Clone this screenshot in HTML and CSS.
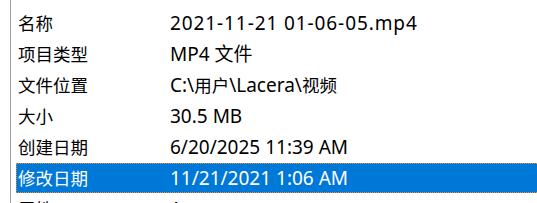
FILE: index.html
```html
<!DOCTYPE html>
<html lang="zh-CN">
  <head>
    <meta charset="utf-8">
    <title>属性</title>
    <link rel="stylesheet" href="styles.css">
  </head>
  <body>
    <div class="pane">
      <ul class="props">
        <li class="row partial"><span class="key"><span class="link">文件</span></span><span class="val"></span></li>
        <li class="row"><span class="key">名称</span><span class="val filename">2021-11-21 01-06-05.mp4</span></li>
        <li class="row"><span class="key">项目类型</span><span class="val">MP4 文件</span></li>
        <li class="row"><span class="key">文件位置</span><span class="val">C:\<span class="cjk">用户</span>\Lacera\<span class="cjk">视频</span></span></li>
        <li class="row"><span class="key">大小</span><span class="val">30.5 MB</span></li>
        <li class="row"><span class="key">创建日期</span><span class="val">6/20/2025 11:39 AM</span></li>
        <li class="row selected"><span class="key">修改日期</span><span class="val">11/21/2021 1:06 AM</span></li>
        <li class="row"><span class="key">属性</span><span class="val">A</span></li>
      </ul>
    </div>
  </body>
</html>
```

FILE: styles.css
```css
html, body {
    margin: 0;
    height: 100%;
    background: #fff;
}
.pane {
    height: 203px;
    overflow: hidden;
    margin-left: 10px;
    border-left: 1px solid #a0a0a0;
    color: #000;
}
.props {
    list-style: none;
    margin: -23px 0 0 0;
    padding: 0 0 0 5px;
}
.row {
    display: flex;
    height: 30px;
    line-height: 28px;
    margin-bottom: 1px;
    border: 1px solid transparent;
    box-sizing: border-box;
    white-space: nowrap;
}
.key {
    width: 152px;
    padding-left: 1px;
    flex: none;
    font-family: "Noto Sans CJK SC", sans-serif;
    font-size: 17.5px;
}
.val {
    flex: 1;
    font-family: "Noto Sans", "Noto Sans CJK SC", sans-serif;
    font-size: 19px;
}
.val .cjk {
    font-family: "Noto Sans CJK SC", sans-serif;
    font-size: 17.5px;
}
.filename {
    letter-spacing: 0.9px;
}
.partial {
    line-height: 22px;
}
.link {
    color: #0066cc;
    padding-left: 22px;
    font-size: 12px;
}
.selected {
    background: #0078d7;
    color: #fff;
    border: 1px dotted #f0922c;
    border-right: none;
}
```
